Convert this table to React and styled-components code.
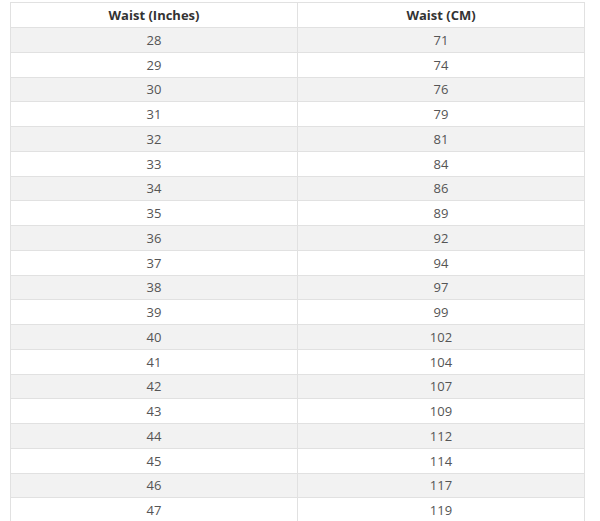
import React from 'react';
import styled, { createGlobalStyle } from 'styled-components';

const GlobalStyle = createGlobalStyle`
  body {
    margin: 0;
    background: #fff;
    font-family: 'Open Sans', 'Liberation Sans', sans-serif;
  }
`;

const sizes = [
  [28, 71],
  [29, 74],
  [30, 76],
  [31, 79],
  [32, 81],
  [33, 84],
  [34, 86],
  [35, 89],
  [36, 92],
  [37, 94],
  [38, 97],
  [39, 99],
  [40, 102],
  [41, 104],
  [42, 107],
  [43, 109],
  [44, 112],
  [45, 114],
  [46, 117],
  [47, 119],
];

const Wrapper = styled.section`
  padding: 2px 16px 0 10px;
`;

const Table = styled.table`
  width: 575px;
  border-collapse: collapse;
  table-layout: fixed;
  font-size: 13px;
  color: #555;
`;

const Row = styled.tr`
  background: ${(p) => (p.$striped ? '#f2f2f2' : '#fff')};
`;

const Head = styled.th`
  height: 24px;
  padding: 0;
  border: 1px solid #e1e1e1;
  font-weight: 700;
  color: #333;
  text-align: center;
  vertical-align: middle;
`;

const Cell = styled.td`
  height: 23.75px;
  padding: 0;
  border: 1px solid #e1e1e1;
  text-align: center;
  vertical-align: middle;
`;

const App = () => {
  return (
    <Wrapper>
      <GlobalStyle />
      <Table>
        <thead>
          <Row>
            <Head>Waist (Inches)</Head>
            <Head>Waist (CM)</Head>
          </Row>
        </thead>
        <tbody>
          {sizes.map(([inch, cm], i) => (
            <Row key={inch} $striped={i % 2 === 0}>
              <Cell>{inch}</Cell>
              <Cell>{cm}</Cell>
            </Row>
          ))}
        </tbody>
      </Table>
    </Wrapper>
  );
};

export default App;
